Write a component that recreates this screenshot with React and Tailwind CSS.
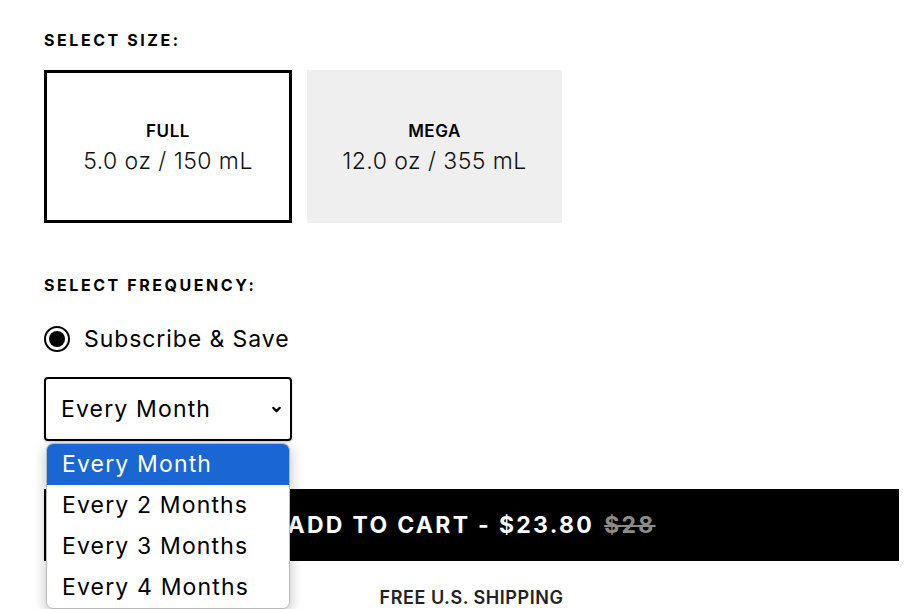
import { ChevronDown } from 'lucide-react'

const FONT = "font-['Inter','Noto_Sans',sans-serif]"

const sizes = [
  { name: 'FULL', detail: '5.0 oz / 150 mL', selected: true },
  { name: 'MEGA', detail: '12.0 oz / 355 mL', selected: false },
]

const options = ['Every Month', 'Every 2 Months', 'Every 3 Months', 'Every 4 Months']

export default function App() {
  return (
    <div className={`${FONT} w-[924px] h-[609px] overflow-hidden bg-white text-black`}>
      <div className="pl-[44px] pr-[25px] pt-[31px]">
        {/* Size picker */}
        <h4 className="text-[16px] font-bold tracking-[0.16em] leading-[18px]">SELECT SIZE:</h4>
        <div className="mt-[21px] flex gap-[15px]">
          {sizes.map((s) => (
            <div
              key={s.name}
              className={
                s.selected
                  ? 'w-[248px] h-[153px] border-[3px] border-black bg-white flex flex-col items-center justify-center pt-[4px]'
                  : 'w-[255px] h-[153px] bg-[#efefef] flex flex-col items-center justify-center pt-[4px]'
              }
            >
              <span className="text-[17px] font-semibold leading-[20px] tracking-[0.03em]">{s.name}</span>
              <span className="mt-[5px] text-[23px] font-light leading-[30px] tracking-[0.02em] text-[#111]">{s.detail}</span>
            </div>
          ))}
        </div>

        {/* Frequency */}
        <h4 className="mt-[53px] text-[16px] font-bold tracking-[0.16em] leading-[18px]">SELECT FREQUENCY:</h4>
        <div className="mt-[31px] flex items-center gap-[14px]">
          <span className="w-[26px] h-[26px] rounded-full border-[2px] border-black flex items-center justify-center">
            <span className="w-[16px] h-[16px] rounded-full bg-black" />
          </span>
          <span className="text-[23px] leading-[28px] tracking-[0.04em]">Subscribe &amp; Save</span>
        </div>

        <div className="relative mt-[24px]">
          <div className="w-[248px] h-[64px] border-[2px] border-black rounded-[4px] flex items-center justify-between pl-[15px] pr-[7px] shadow-[0_1px_2px_rgba(0,0,0,0.2)]">
            <span className="text-[23px] leading-[28px] tracking-[0.05em]">Every Month</span>
            <ChevronDown size={13} strokeWidth={4} />
          </div>

          {/* Open dropdown list */}
          <ul className="absolute left-[2px] top-[66px] z-10 w-[244px] rounded-[7px] border border-[#b9b9b9] bg-white overflow-hidden shadow-[0_4px_14px_rgba(0,0,0,0.25)]">
            {options.map((o, i) => (
              <li
                key={o}
                className={
                  i === 0
                    ? 'h-[41px] pl-[15px] flex items-center text-[23px] tracking-[0.05em] bg-[#1a66d2] text-white'
                    : 'h-[41px] pl-[15px] flex items-center text-[23px] tracking-[0.05em] text-black'
                }
              >
                {o}
              </li>
            ))}
          </ul>

          <button className="mt-[48px] w-[855px] h-[72px] bg-black text-white flex items-center justify-center gap-[10px] text-[23px] font-bold tracking-[0.1em]">
            <span>ADD TO CART - $23.80</span>
            <span className="line-through text-[#8a8a8a]">$28</span>
          </button>

          <p className="w-[855px] mt-[26px] text-center text-[18px] font-semibold tracking-[0.03em] text-[#222] leading-[22px]">FREE U.S. SHIPPING</p>
        </div>
      </div>
    </div>
  )
}
